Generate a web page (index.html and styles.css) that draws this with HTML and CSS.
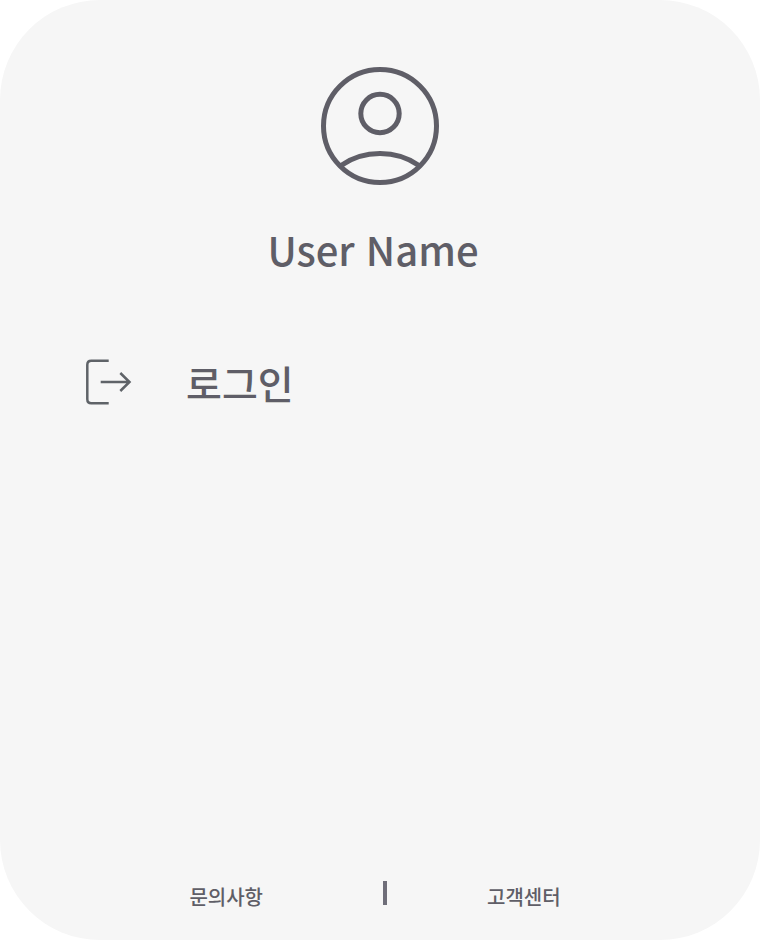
FILE: index.html
```html
<!DOCTYPE html>
<html lang="ko">
<head>
<meta charset="utf-8">
<meta name="viewport" content="width=device-width, initial-scale=1">
<title>User Name</title>
<link rel="stylesheet" href="styles.css">
</head>
<body>
<main class="panel">
  <header class="profile">
    <svg class="avatar" viewBox="0 0 120 120" aria-hidden="true">
      <circle cx="60" cy="60" r="56.5"/>
      <circle cx="60" cy="47.5" r="19.200"/>
      <path d="M21 99.500Q38 87.500 60 87.500T99 99.500"/>
    </svg>
    <h1 class="name">User Name</h1>
  </header>
  <nav class="menu">
    <a class="item" href="#login">
      <svg class="icon" viewBox="0 0 48 48" aria-hidden="true">
        <path d="M24.700 2.800H7.300Q3.300 2.800 3.300 6.800V41.200Q3.300 45.200 7.300 45.200H24.700M16.700 24H45.500M36.300 15L45.500 24L36.300 33"/>
      </svg>
      <span>로그인</span>
    </a>
  </nav>
  <footer class="footer">
    <a class="link" href="#inquiry">문의사항</a>
    <span class="divider"></span>
    <a class="link" href="#support">고객센터</a>
  </footer>
</main>
</body>
</html>
```
FILE: styles.css
```css
* { box-sizing: border-box; }
body {
  margin: 0;
  background: #fff;
  color: #5f5e67;
  font-family: "Noto Sans CJK KR", sans-serif;
  font-weight: 500;
}
.panel {
  display: flex;
  flex-direction: column;
  min-height: 100vh;
  padding: 66px 84px 27px;
  border-radius: 100px;
  background: #f6f6f6;
}
.profile {
  display: flex;
  flex-direction: column;
  align-items: center;
}
svg {
  flex: none;
  fill: none;
  stroke: currentColor;
}
.avatar { width: 120px; height: 120px; stroke-width: 5; }
.name {
  margin: 31px 14px 0 0;
  font-size: 40px;
  line-height: 64px;
  font-weight: 500;
}
.menu { margin-top: 69px; }
.item {
  display: flex;
  align-items: center;
  gap: 54px;
  color: inherit;
  font-size: 39px;
  line-height: 64px;
  text-decoration: none;
}
.icon { width: 48px; height: 48px; stroke: #5f6368; stroke-width: 2.5; }
.footer {
  display: flex;
  justify-content: center;
  margin: auto 10px 0 0;
}
.link {
  color: inherit;
  font-size: 20px;
  line-height: 32px;
  text-decoration: none;
}
.divider {
  width: 4px;
  height: 24px;
  margin: 0 100px 0 120px;
  background: #6f6e79;
}
```
